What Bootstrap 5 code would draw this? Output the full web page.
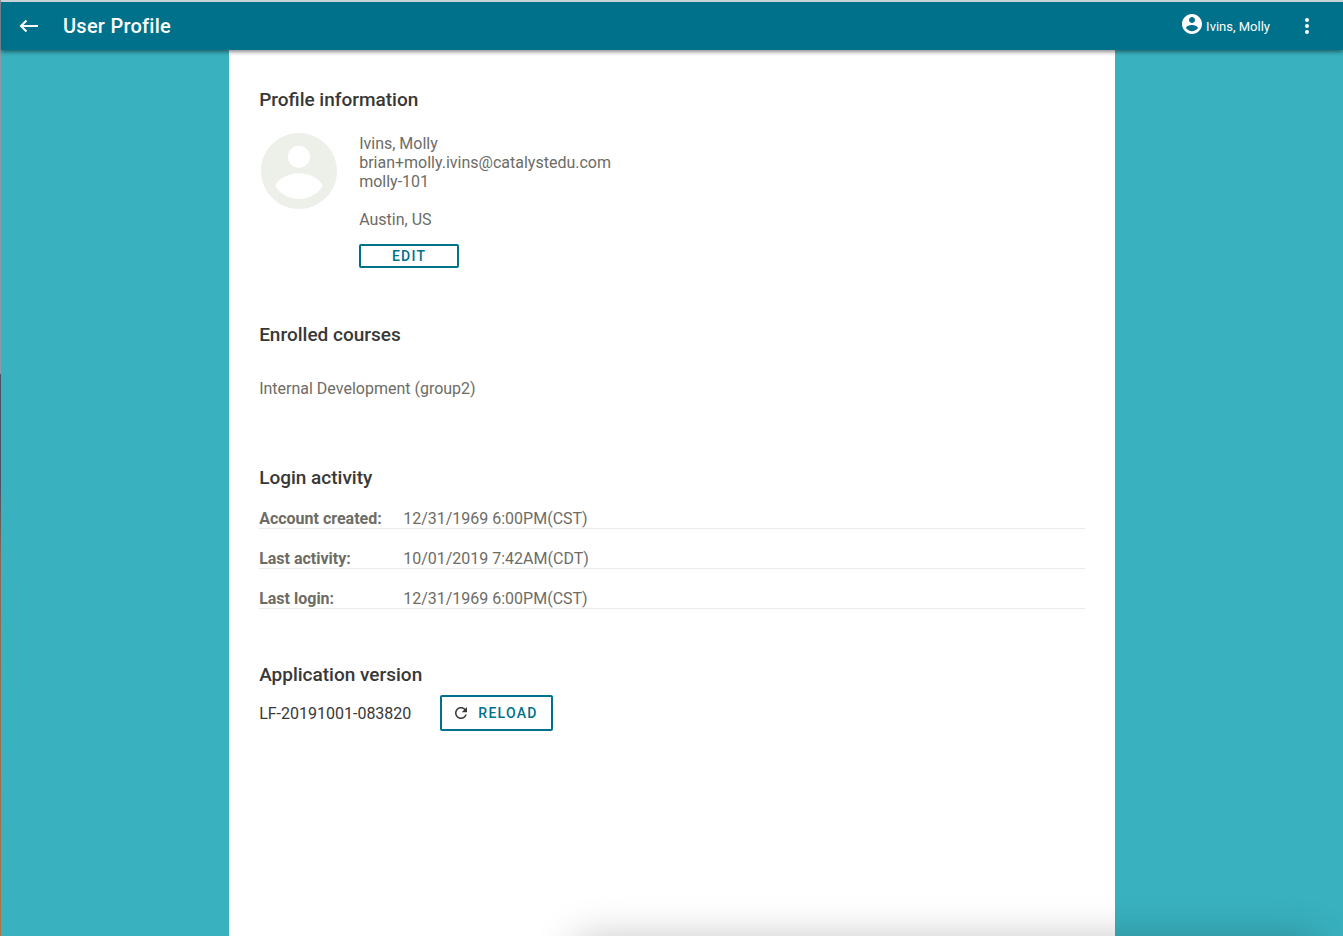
<!DOCTYPE html>
<html lang="en">
<head>
<meta charset="utf-8">
<meta name="viewport" content="width=device-width, initial-scale=1">
<title>User Profile</title>
<link href="https://cdn.jsdelivr.net/npm/bootstrap@5.3.0/dist/css/bootstrap.min.css" rel="stylesheet">
<style>
  :root { --brand: #00718a; --ink: #383836; --soft: #6d6c65; }
  body { font-family: Roboto, sans-serif; font-size: 16px; line-height: 19px; color: var(--soft); background: #39b1bf; overflow: hidden; }
  .page-frame { border-left: 1px solid; border-image: linear-gradient(#8b9ba6 40%, #4c5263 40%, #4c5263 52%, #8b6a58 60%, #a8764b) 1; }
  .app-bar { height: 50px; background: var(--brand); border-top: 2px solid #c9d3d6; box-shadow: 0 2px 4px rgba(0,0,0,.45); z-index: 2; padding: 0 24px 0 16px; }
  .app-bar h1 { font-size: 20px; line-height: 24px; font-weight: 500; letter-spacing: .0125em; margin: 0 auto 0 22px; }
  .bar-button { color: #fff; width: 24px; height: 24px; }
  .account { font-size: 13px; gap: 4px; margin-right: 25px; }
  .panel { width: 66%; padding: 38px 30px; background: #fff; }
  .panel h2 { font-size: 19px; line-height: 24px; font-weight: 500; color: var(--ink); margin: 0; }
  .avatar { width: 76px; height: 76px; margin: 0 22px 0 2px; fill: #edf0e9; }
  .profile { margin-top: 21px; }
  .details { padding: 1px 0; }
  .section { margin-top: 54px; }
  .course { margin: 0; padding: 32px 0 14px; }
  .btn-line { border: 2px solid var(--brand); border-radius: 2px; color: var(--brand); background: #fff; font-size: 14px; line-height: 20px; font-weight: 500; letter-spacing: .0892857em; padding: 0; }
  .btn-line:hover { border-color: var(--brand); color: var(--brand); background: #eef7f9; }
  .edit { width: 100px; height: 24px; margin-top: 15px; }
  .reload { height: 36px; padding: 0 13px 0 10px; gap: 8px; margin-left: 29px; }
  .activity { margin-top: 19px; }
  .activity th, .activity td { padding: 0; color: var(--soft); line-height: 19px; }
  .activity tr { border-bottom: 1px solid #ebebeb; }
  .activity tr + tr > * { padding-top: 20px; }
  .activity th { width: 144px; font-weight: 700; }
  .version { color: var(--ink); margin-top: 8px; }
  .dock-shade { left: 43%; right: 2%; top: 100%; height: 24px; border-radius: 10px; box-shadow: 0 8px 40px 4px rgba(0,0,0,.27); z-index: 3; }
</style>
</head>
<body>
<div class="page-frame d-flex flex-column vh-100 position-relative">
  <header class="app-bar d-flex align-items-center text-white position-relative flex-shrink-0">
    <button class="btn p-0 border-0 bar-button d-flex" aria-label="Back">
      <svg width="24" height="24" viewBox="0 0 24 24" fill="none" stroke="currentColor" stroke-width="2"><path d="M21 12H4.500M9.500 6.500 4 12l5.500 5.500"/></svg>
    </button>
    <h1>User Profile</h1>
    <a href="#" class="account d-flex align-items-center text-white text-decoration-none">
      <svg class="mb-1" width="20" height="20" viewBox="2 2 20 20" fill="currentColor" aria-hidden="true"><path d="M12 2C6.480 2 2 6.480 2 12s4.480 10 10 10 10-4.480 10-10S17.520 2 12 2zm0 3c1.660 0 3 1.340 3 3s-1.340 3-3 3-3-1.340-3-3 1.340-3 3-3zm0 14.200c-2.500 0-4.710-1.280-6-3.220.030-1.990 4-3.080 6-3.080 1.990 0 5.970 1.090 6 3.080-1.290 1.940-3.500 3.220-6 3.220z"/></svg>
      <span>Ivins, Molly</span>
    </a>
    <button class="btn p-0 border-0 bar-button d-flex" aria-label="More options">
      <svg width="24" height="24" viewBox="0 0 24 24" fill="currentColor"><circle cx="12" cy="6" r="2"/><circle cx="12" cy="12" r="2"/><circle cx="12" cy="18" r="2"/></svg>
    </button>
  </header>

  <main class="panel mx-auto flex-grow-1">
    <section>
      <h2>Profile information</h2>
      <div class="profile d-flex align-items-start">
        <svg class="avatar flex-shrink-0" viewBox="2 2 20 20" aria-hidden="true"><path d="M12 2C6.480 2 2 6.480 2 12s4.480 10 10 10 10-4.480 10-10S17.520 2 12 2zm0 3.350c1.600 0 2.900 1.300 2.900 2.900s-1.300 2.900-2.900 2.900-2.900-1.300-2.900-2.900 1.300-2.900 2.900-2.900zm0 14.050c-2.800 0-5.300-1.600-6.200-3.500.7-2 3.700-3.300 6.200-3.300s5.500 1.300 6.200 3.300c-.9 1.900-3.400 3.500-6.200 3.500z"/></svg>
        <div class="details">
          <div>Ivins, Molly</div>
          <div>brian+molly.ivins@catalystedu.com</div>
          <div>molly-101</div>
          <br>
          <div>Austin, US</div>
          <button class="btn btn-line edit d-flex align-items-center justify-content-center">EDIT</button>
        </div>
      </div>
    </section>

    <section class="section">
      <h2>Enrolled courses</h2>
      <p class="course">Internal Development (group2)</p>
    </section>

    <section class="section">
      <h2>Login activity</h2>
      <table class="activity w-100">
        <tbody>
          <tr><th scope="row">Account created:</th><td>12/31/1969 6:00PM(CST)</td></tr>
          <tr><th scope="row">Last activity:</th><td>10/01/2019 7:42AM(CDT)</td></tr>
          <tr><th scope="row">Last login:</th><td>12/31/1969 6:00PM(CST)</td></tr>
        </tbody>
      </table>
    </section>

    <section class="section">
      <h2>Application version</h2>
      <div class="version d-flex align-items-center">
        <span>LF-20191001-083820</span>
        <button class="btn btn-line reload d-flex align-items-center">
          <svg width="18" height="18" viewBox="0 0 24 24" fill="#383836" aria-hidden="true"><path d="M17.650 6.350C16.200 4.900 14.210 4 12 4c-4.420 0-7.990 3.580-7.990 8s3.570 8 7.990 8c3.730 0 6.840-2.550 7.730-6h-2.080c-.820 2.330-3.040 4-5.650 4-3.310 0-6-2.690-6-6s2.690-6 6-6c1.660 0 3.140.690 4.220 1.780L13 11h7V4l-2.350 2.350z"/></svg>
          <span>RELOAD</span>
        </button>
      </div>
    </section>
  </main>
  <div class="dock-shade position-absolute"></div>
</div>
<script src="https://cdn.jsdelivr.net/npm/bootstrap@5.3.0/dist/js/bootstrap.bundle.min.js"></script>
</body>
</html>
